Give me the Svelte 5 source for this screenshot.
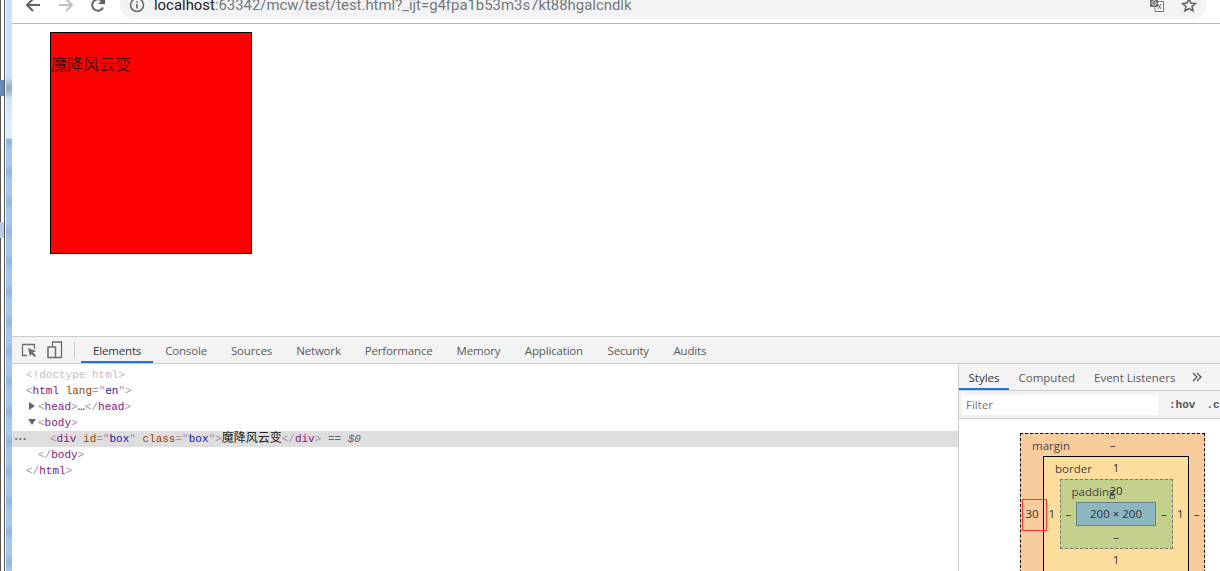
<script>
  const mainTabs = ['Elements', 'Console', 'Sources', 'Network', 'Performance', 'Memory', 'Application', 'Security', 'Audits'];
  const sideTabs = ['Styles', 'Computed', 'Event Listeners'];
</script>

<div class="shell">
  <div class="strip"><i class="rule a"></i><i class="rule b"></i><i class="blue"></i><i class="mark m1"></i><i class="mark m2"></i></div>
  <div class="main">
    <header class="toolbar">
      <button class="nav" aria-label="back">
        <svg width="16" height="16" viewBox="0 0 16 16"><path d="M15 8H2.500M8 2 2 8l6 6" fill="none" stroke="#5f6368" stroke-width="2"/></svg>
      </button>
      <button class="nav" aria-label="forward">
        <svg width="16" height="16" viewBox="0 0 16 16"><path d="M1 8h12.500M8 2l6 6-6 6" fill="none" stroke="#bdc1c6" stroke-width="2"/></svg>
      </button>
      <button class="nav" aria-label="reload">
        <svg width="16" height="16" viewBox="0 0 16 16"><path d="M13 10.500A5.700 5.700 0 1 1 12 4" fill="none" stroke="#5f6368" stroke-width="2"/><path d="M15 0v7H8z" fill="#5f6368"/></svg>
      </button>
      <div class="omnibox">
        <svg class="info" width="16" height="16" viewBox="0 0 16 16"><circle cx="8" cy="8" r="6.500" fill="none" stroke="#5f6368" stroke-width="1.500"/><path d="M7.200 7h1.600v4.500H7.200zM7.200 4.200h1.600v1.600H7.200z" fill="#5f6368"/></svg>
        <span class="url"><b>localhost</b>:63342/mcw/test/test.html?_ijt=g4fpa1b53m3s7kt88hgalcndlk</span>
        <svg class="translate" width="16" height="14" viewBox="0 0 16 14"><path d="M6 3.500h8.500V13.500H6z" fill="#fff" stroke="#777"/><path d="M1 0h8v9H1z" fill="#6d6d6d"/><path d="M7 3.500A2.300 2.300 0 1 0 7 6.500V5H5" fill="none" stroke="#ddd"/><path d="m9 6 3 5M12 6l-3 5" stroke="#666"/></svg>
        <svg class="star" width="16" height="16" viewBox="0 0 16 16"><path d="m8 1.800 1.900 4.300 4.600.4-3.500 3 1.100 4.500L8 11.600 3.900 14 5 9.500l-3.500-3 4.600-.4z" fill="none" stroke="#5f6368" stroke-width="1.500"/></svg>
      </div>
    </header>

    <section class="page">
      <div class="box">魔降风云变</div>
    </section>

    <section class="devtools">
      <nav class="dt-bar">
        <svg class="dt-icon" width="16" height="16" viewBox="0 0 16 16"><path d="M6 13.500H1.500V2.500h12V7" fill="none" stroke="#6e6e6e" stroke-width="1.300"/><path d="m7 6 8 3-3 1.500 3 3-1.500 1.500-3-3L9 14.500z" fill="#6e6e6e"/></svg>
        <svg class="dt-icon" width="16" height="18" viewBox="0 0 16 18"><path d="M5.500 5V1h9v15.500H9" fill="none" stroke="#6e6e6e" stroke-width="1.300"/><rect x="1" y="6" width="7.500" height="10.500" fill="none" stroke="#6e6e6e" stroke-width="1.500"/></svg>
        <span class="divider"></span>
        {#each mainTabs as tab, i}
          <span class="tab" class:active={i === 0}>{tab}</span>
        {/each}
      </nav>

      <div class="panes">
        <div class="code">
          <div class="line d0 doctype">&lt;!doctype html&gt;</div>
          <div class="line d0"><s>&lt;</s><em>html</em> <u>lang</u><s>="</s><q>en</q><s>"&gt;</s></div>
          <div class="line d1"><i class="tri right"></i><s>&lt;</s><em>head</em><s>&gt;</s><span class="txt">…</span><s>&lt;/</s><em>head</em><s>&gt;</s></div>
          <div class="line d1"><i class="tri down"></i><s>&lt;</s><em>body</em><s>&gt;</s></div>
          <div class="line d2 selected"><span class="dots">•••</span><s>&lt;</s><em>div</em> <u>id</u><s>="</s><q>box</q><s>"</s> <u>class</u><s>="</s><q>box</q><s>"&gt;</s><span class="txt">魔降风云变</span><s>&lt;/</s><em>div</em><s>&gt;</s> <span class="eq">== <span>$0</span></span></div>
          <div class="line d1"><s>&lt;/</s><em>body</em><s>&gt;</s></div>
          <div class="line d0"><s>&lt;/</s><em>html</em><s>&gt;</s></div>
        </div>

        <aside class="side">
          <div class="side-tabs">
            {#each sideTabs as tab, i}
              <span class="stab" class:active={i === 0}>{tab}</span>
            {/each}
            <svg class="more" width="10" height="10" viewBox="0 0 10 10"><path d="m1 1 4 4-4 4M5 1l4 4-4 4" fill="none" stroke="#555" stroke-width="1.300"/></svg>
          </div>
          <div class="filter">
            <span class="filter-input">Filter</span>
            <span class="pseudo">:hov</span>
            <span class="pseudo">.cls</span>
          </div>
          <div class="model">
            <div class="bm bm-margin">
              <span class="label">margin</span>
              <div class="bm-row">–</div>
              <div class="bm-mid">
                <div class="cell left-m">30<i class="highlight"></i></div>
                <div class="bm bm-border">
                  <span class="label">border</span>
                  <div class="bm-row">1</div>
                  <div class="bm-mid">
                    <div class="cell c16">1</div>
                    <div class="bm bm-padding">
                      <span class="label">padding</span>
                      <div class="bm-row">20</div>
                      <div class="bm-mid">
                        <div class="cell c16">–</div>
                        <div class="bm-content">200 × 200</div>
                        <div class="cell c16">–</div>
                      </div>
                      <div class="bm-row">–</div>
                    </div>
                    <div class="cell c16">1</div>
                  </div>
                  <div class="bm-row">1</div>
                </div>
                <div class="cell right-m">–</div>
              </div>
            </div>
          </div>
        </aside>
      </div>
    </section>
  </div>
</div>

<style>
  :global(body) {
    margin: 0;
    background: #fff;
  }

  .shell {
    display: flex;
    width: 1220px;
    height: 571px;
    overflow: hidden;
    font-family: "Open Sans", "Noto Sans CJK SC", sans-serif;
  }

  /* 左边露出的另一个窗口 */
  .strip {
    position: relative;
    flex: 0 0 12px;
    background: #fff;
  }
  .rule {
    position: absolute;
    top: 0;
    bottom: 0;
    width: 1px;
    background: #555;
  }
  .rule.a { left: 0; }
  .rule.b { left: 4px; }
  .blue {
    position: absolute;
    left: 6px;
    right: 0;
    top: 0;
    bottom: 0;
    background:
      linear-gradient(#c9e2fb 0, #c9e2fb 76px, #94a9c6 88px, #d3e5fb 100px, #e3effc 138px, transparent 139px),
      repeating-linear-gradient(#a6c8f0 0, #a6c8f0 14px, #8fb4de 22px, #a6c8f0 30px);
  }
  .mark {
    position: absolute;
    left: 0;
    width: 4px;
  }
  .m1 { top: 80px; height: 16px; background: #6a88b8; }
  .m2 { top: 222px; height: 16px; background: #b8cce8; }

  .main {
    flex: 1;
    min-width: 0;
    display: flex;
    flex-direction: column;
  }

  .toolbar {
    flex: 0 0 24px;
    box-sizing: border-box;
    display: flex;
    align-items: flex-end;
    padding: 0 13px 4px 5px;
    border-bottom: 1px solid #b5b5b5;
    overflow: hidden;
  }
  .nav {
    flex: 0 0 32.5px;
    height: 28px;
    padding: 0;
    display: flex;
    align-items: center;
    justify-content: center;
    border: none;
    background: none;
  }
  .omnibox {
    flex: 1;
    height: 28px;
    margin-left: 5.5px;
    display: flex;
    align-items: center;
    padding: 0 10px 0 9px;
    background: #f1f3f4;
    border-radius: 14px;
  }
  .url {
    margin-left: 9px;
    flex: 1;
    font: 14.9px Roboto, sans-serif;
    color: #74787d;
    white-space: nowrap;
  }
  .url b {
    font-weight: 400;
    color: #202124;
  }
  .translate { margin-right: 16px; }

  .page {
    flex: 1;
    padding: 8px;
    background: #fff;
  }
  .box {
    width: 200px;
    height: 200px;
    margin-left: 30px;
    padding-top: 20px;
    border: 1px solid #000;
    background: #f00;
    color: #000;
    font-size: 16px;
    line-height: 20px;
    font-family: "Noto Sans CJK SC", sans-serif;
    font-weight: 300;
  }

  .devtools {
    flex: 0 0 235px;
    display: flex;
    flex-direction: column;
    min-height: 0;
    border-top: 1px solid #ccc;
    box-sizing: border-box;
  }
  .dt-bar {
    flex: 0 0 27px;
    box-sizing: border-box;
    display: flex;
    align-items: flex-start;
    padding-left: 9px;
    background: #f3f3f3;
    border-bottom: 1px solid #ccc;
  }
  .dt-icon {
    margin: 5px 10px 0 0;
    flex: none;
  }
  .dt-bar svg:nth-child(2) { margin-top: 4px; }
  .divider {
    flex: none;
    width: 1px;
    height: 16px;
    margin: 5px 6px 0 1px;
    background: #ccc;
  }
  .tab {
    height: 26px;
    box-sizing: border-box;
    padding: 0 12px;
    line-height: 27px;
    font-size: 11.5px;
    letter-spacing: -0.17px;
    color: #5a5a5a;
    white-space: nowrap;
  }
  .tab:nth-of-type(n + 8) { margin-left: 0.5px; }
  .tab.active {
    color: #333;
    border-bottom: 2px solid #1a73e8;
  }

  .panes {
    flex: 1;
    min-height: 0;
    display: flex;
  }
  .code {
    flex: 1;
    padding-top: 3px;
    font: 11px/16px "Liberation Mono", "Noto Sans CJK SC", monospace;
    color: #000;
  }
  .line {
    position: relative;
    height: 16px;
    white-space: pre;
  }
  .d0 { padding-left: 14px; }
  .d1 { padding-left: 26px; }
  .d2 { padding-left: 38px; }
  .doctype { color: #c0c0c0; }
  .code s { text-decoration: none; color: #a894a6; }
  .code em { font-style: normal; color: #881280; }
  .code u { text-decoration: none; color: #994500; }
  .code q { quotes: none; color: #1a1aa6; }
  .txt { font-size: 12px; color: #222; }
  .selected { background: #dedede; }
  .eq { color: #666; }
  .eq span { font-style: italic; }
  .dots {
    position: absolute;
    left: 2px;
    top: 0;
    font-size: 7px;
    color: #666;
  }
  .tri {
    position: absolute;
    left: 17px;
    width: 0;
    height: 0;
    border-style: solid;
    border-color: transparent;
  }
  .tri.right {
    top: 3px;
    border-width: 4px 0 4px 6px;
    border-left-color: #666;
  }
  .tri.down {
    top: 4px;
    left: 16px;
    border-width: 6px 4px 0 4px;
    border-top-color: #666;
  }

  .side {
    flex: 0 0 262px;
    box-sizing: border-box;
    border-left: 1px solid #ccc;
    overflow: hidden;
    display: flex;
    flex-direction: column;
  }
  .side-tabs {
    flex: 0 0 27px;
    box-sizing: border-box;
    display: flex;
    align-items: flex-start;
    background: #f3f3f3;
    border-bottom: 1px solid #ccc;
  }
  .stab {
    height: 26px;
    box-sizing: border-box;
    padding: 0 9.500px;
    line-height: 27px;
    font-size: 11.5px;
    color: #5a5a5a;
    white-space: nowrap;
  }
  .stab.active {
    color: #333;
    border-bottom: 2px solid #1a73e8;
  }
  .more { margin: 8px 0 0 7px; }
  .filter {
    flex: 0 0 28px;
    box-sizing: border-box;
    display: flex;
    align-items: center;
    padding-left: 3px;
    background: #f3f3f3;
    border-bottom: 1px solid #ccc;
    white-space: nowrap;
  }
  .filter-input {
    flex: 0 0 196px;
    box-sizing: border-box;
    height: 20px;
    padding-left: 4px;
    background: #fff;
    font-size: 11.5px;
    line-height: 20px;
    color: #757575;
  }
  .pseudo {
    margin-left: 11px;
    font: bold 11px "Liberation Mono", monospace;
    color: #555;
  }

  .model {
    padding: 14px 0 0 61px;
    font-size: 11.5px;
    line-height: 22px;
    color: #333;
  }
  .bm {
    position: relative;
    box-sizing: border-box;
    text-align: center;
  }
  .label {
    position: absolute;
    left: 11px;
    top: 1px;
    color: #444;
  }
  .bm-margin {
    width: 185px;
    background: #f9cc9d;
    border: 1px dashed #000;
  }
  .bm-border {
    width: 146px;
    background: #fddd9b;
    border: 1px solid #000;
  }
  .bm-padding {
    width: 113px;
    background: #c3d08b;
    border: 1px dashed #777;
  }
  .bm-row { height: 22px; }
  .bm-mid {
    display: flex;
    align-items: center;
  }
  .cell {
    position: relative;
    line-height: 24px;
  }
  .left-m {
    flex: 0 0 22px;
    z-index: 1;
  }
  .right-m { flex: 0 0 15px; }
  .c16 { flex: 1; }
  .bm-content {
    flex: 0 0 80px;
    box-sizing: border-box;
    height: 24px;
    line-height: 22px;
    background: #8cb6c0;
    border: 1px solid #6b7f85;
  }
  .highlight {
    position: absolute;
    left: 1px;
    top: -3px;
    width: 25px;
    height: 32px;
    box-sizing: border-box;
    border: 1px solid #f33;
  }
</style>
